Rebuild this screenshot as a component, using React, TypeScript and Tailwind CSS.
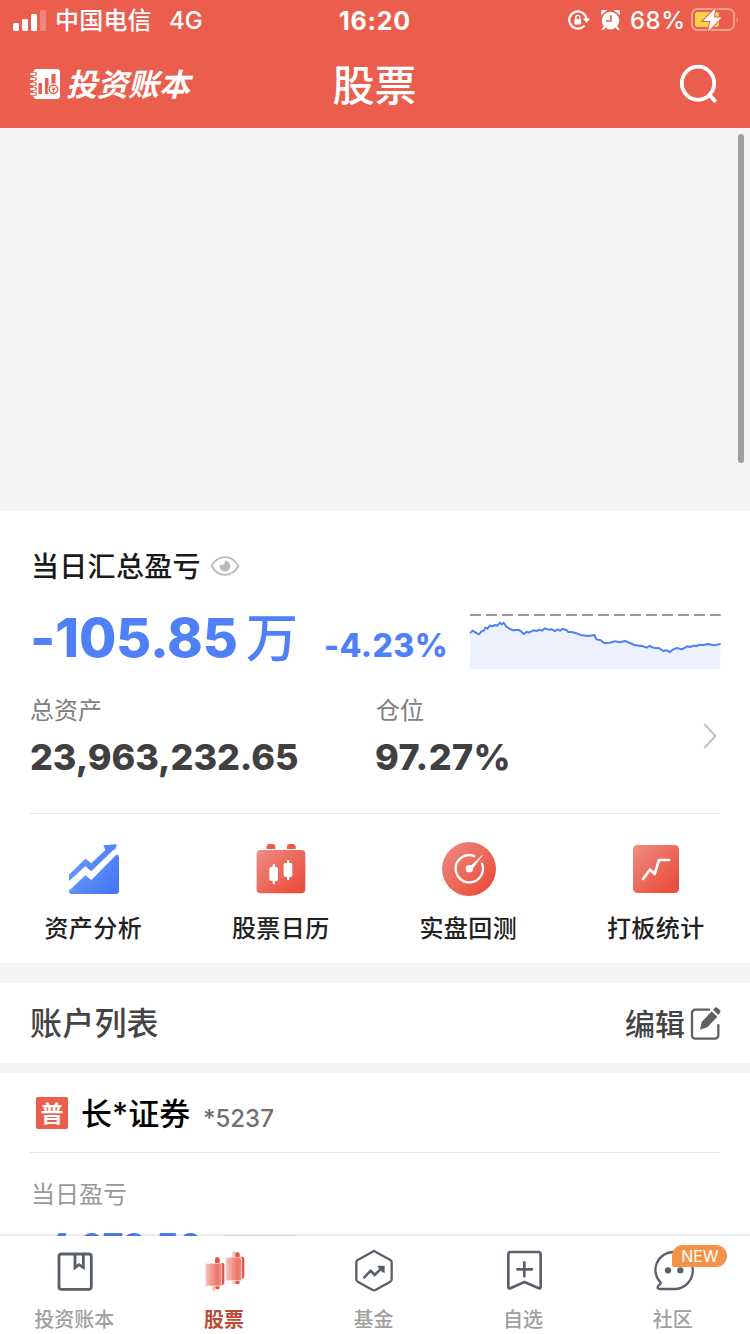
import React from 'react';

const trend = [
  [480, 114], [488, 107], [496, 112], [507, 118], [514, 110], [522, 106], [526, 98], [532, 101],
  [540, 91], [547, 94], [555, 90], [562, 92], [570, 83], [575, 88], [581, 83], [588, 94],
  [600, 102], [610, 106], [625, 104], [634, 110], [642, 117], [650, 110], [657, 113], [670, 106],
  [680, 108], [688, 104], [695, 107], [705, 100], [715, 104], [725, 103], [735, 108], [743, 103],
  [750, 107], [757, 102], [768, 104], [775, 111], [785, 111], [800, 115], [815, 121], [835, 123],
  [853, 120], [859, 133], [872, 136], [882, 144], [900, 143], [915, 139], [930, 142], [945, 138],
  [960, 144], [975, 151], [990, 152], [1000, 154], [1010, 158], [1018, 153], [1030, 158], [1048, 160],
  [1060, 168], [1070, 166], [1080, 171], [1090, 163], [1100, 159], [1115, 163], [1125, 158], [1132, 154],
  [1140, 156], [1150, 152], [1160, 153], [1168, 149], [1180, 150], [1195, 147], [1205, 149], [1215, 151],
  [1225, 148], [1232, 147],
];

const StatusBar: React.FC = () => (
  <div className="flex h-10 items-center pl-[13px] pr-[11px] text-white">
    <svg className="h-[21px] w-[33px]" viewBox="0 0 33 21" fill="currentColor">
      <rect x="0" y="13" width="6" height="8" rx="1.5" />
      <rect x="9" y="9" width="6" height="12" rx="1.5" />
      <rect x="18" y="4" width="6" height="17" rx="1.5" />
      <rect x="27" y="0" width="6" height="21" rx="1.5" opacity="0.25" />
    </svg>
    <span className="ml-[9px] w-[114px] pt-[2px] text-[24px] font-medium leading-10 tracking-[0.2px]">中国电信</span>
    <span className="w-[170px] pt-[2px] text-[24px] font-medium leading-10">4G</span>
    <span className="w-[229px] pt-[2px] text-[25px] font-bold leading-10 tracking-[0.8px]">16:20</span>
    <svg className="h-5 w-[22px]" viewBox="0 0 22 20" fill="none" stroke="currentColor" strokeWidth="2.2">
      <path d="M18.4 9.2A8.6 8.6 0 1 0 15.8 16.2" strokeLinecap="round" />
      <path d="M15 8.6H22L18.6 13Z" fill="currentColor" stroke="none" />
      <rect x="6.4" y="9" width="6.8" height="5.6" rx="1" fill="currentColor" stroke="none" />
      <path d="M7.8 9.4V7.4a2 2 0 0 1 4 0V9.4" strokeWidth="1.4" />
    </svg>
    <svg className="ml-[11px] h-5 w-[19px]" viewBox="0 0 19 20" fill="currentColor">
      <circle cx="9.5" cy="10.6" r="8.8" />
      <path d="M0.4 5A3.2 3.2 0 0 1 6 0.6ZM18.6 5A3.2 3.2 0 0 0 13 0.6Z" />
      <path d="M3.6 17L1.6 19.4M15.4 17L17.4 19.4" stroke="currentColor" strokeWidth="2" strokeLinecap="round" />
      <path d="M10 5V11H5" fill="none" stroke="#eb5e4e" strokeWidth="1.6" />
    </svg>
    <span className="ml-[10px] w-[61px] whitespace-nowrap pt-[2px] text-[24px] font-medium leading-10 tracking-[0.5px]">68%</span>
    <svg className="h-6 w-12" viewBox="0 0 48 24" fill="none">
      <rect x="1" y="1" width="42" height="21" rx="5.5" stroke="#fff" strokeOpacity="0.4" strokeWidth="2" />
      <path d="M45.6 8.5C47.5 9.5 47.5 14 45.6 15Z" fill="#fff" fillOpacity="0.4" />
      <rect x="4" y="4" width="24" height="15" rx="2.5" fill="#f7d04c" />
      <path d="M24.5 0L12 13H19.5L17 23.5L30.5 9.5H22.8Z" fill="#fff" stroke="#eb5e4e" strokeWidth="2" paintOrder="stroke" />
    </svg>
  </div>
);

const Header: React.FC = () => (
  <div className="flex h-[88px] items-center justify-between pl-[30px] pr-8 text-white">
    <div className="flex w-[200px] items-center">
      <svg className="h-[30px] w-[31px]" viewBox="0 0 31 30">
        <rect x="3.5" y="0" width="26.5" height="30" rx="3" fill="#fff" />
        {[5, 10, 15, 20, 25].map((y) => (
          <g key={y}>
            <rect x="3" y={y - 2} width="4" height="4" rx="2" fill="#eb5e4e" />
            <rect x="0" y={y - 1} width="5.6" height="2" rx="1" fill="#fff" />
          </g>
        ))}
        <path d="M8.5 14H12V25H8.5ZM15 9H18.5V25H15ZM21.5 5H25.5V16H21.5Z" fill="#eb5e4e" />
        <circle cx="23.5" cy="20.3" r="5.4" fill="#eb5e4e" stroke="#fff" strokeWidth="1" />
        <circle cx="23.5" cy="20.3" r="3.4" fill="#fff" />
        <path d="M21.8 18.2L23.5 20L25.2 18.2M21.8 20.4H25.2M23.5 20V23" stroke="#eb5e4e" strokeWidth="1" fill="none" />
      </svg>
      <span className="ml-[5px] pt-[2px] text-[31px] font-bold italic leading-[44px]">投资账本</span>
    </div>
    <h1 className="pt-[3px] pr-px text-[42px] font-medium leading-[60px]">股票</h1>
    <div className="flex w-[198px] justify-end">
      <svg className="-mr-px h-10 w-10" viewBox="0 0 40 40" fill="none" stroke="currentColor" strokeWidth="3.8">
        <ellipse cx="19" cy="19.2" rx="16.2" ry="16.6" />
        <path d="M30.5 31L35.6 36.6" strokeLinecap="round" strokeWidth="4" />
      </svg>
    </div>
  </div>
);

const EyeIcon: React.FC = () => (
  <svg className="-mt-[2px] h-5 w-[30px]" viewBox="0 0 30 20" fill="none">
    <path d="M1.5 10C5 4 10 1.2 15 1.2S25 4 28.5 10C25 16 20 18.8 15 18.8S5 16 1.5 10Z" stroke="#bbb" strokeWidth="1.8" strokeLinejoin="round" />
    <path d="M15 4.6A5.4 5.4 0 1 1 9.6 10C9.6 9.4 9.8 8.6 10 8.2C11.5 9.8 15.4 9 15 4.6Z" fill="#bbb" />
  </svg>
);

const TrendChart: React.FC = () => {
  const line = trend.map(([x, y]) => `${x},${y}`).join(' ');
  return (
    <svg className="h-[57px] w-[252px]" viewBox="477 51 756 171" fill="none">
      <polygon points={`480,222 ${line} 1230,222`} fill="#edf1fd" />
      <polyline points={line} stroke="#5080f7" strokeWidth="6" strokeLinejoin="round" />
      <path d="M480 60H1232" stroke="#999" strokeWidth="6" strokeDasharray="33 15" />
    </svg>
  );
};

const Summary: React.FC = () => (
  <section className="h-[302px] px-[30px] pt-[34px]">
    <div className="flex h-11 items-center">
      <h2 className="w-[180px] pl-px text-[28px] font-medium leading-[44px] tracking-[0.3px] text-[#1a1a1a]">当日汇总盈亏</h2>
      <EyeIcon />
    </div>
    <div className="flex h-[90px] items-start text-[#5080f7]">
      <div className="flex w-[294px] shrink-0 items-baseline pt-[14px] leading-[70px]">
        <span className="w-[216px] text-[54px] font-extrabold tracking-[-0.2px]">-105.85</span>
        <span className="text-[52px] font-medium">万</span>
      </div>
      <span className="w-[145px] shrink-0 pt-[34px] text-[32px] font-extrabold leading-[46px] tracking-[0.4px]">-4.23%</span>
      <div className="shrink-0 pt-[23px]">
        <TrendChart />
      </div>
    </div>
    <div className="flex h-[116px] items-start">
      <div className="w-[345px]">
        <p className="pt-[14px] text-[24px] leading-[36px] text-[#808080]">总资产</p>
        <p className="pt-[4px] text-[36px] font-extrabold leading-[48px] tracking-[-0.1px] text-[#404040]">23,963,232.65</p>
      </div>
      <div className="w-[328px]">
        <p className="pt-[14px] pl-px text-[24px] leading-[36px] text-[#808080]">仓位</p>
        <p className="pt-[4px] text-[36px] font-extrabold leading-[48px] tracking-[0.4px] text-[#404040]">97.27%</p>
      </div>
      <svg className="mt-[44px] h-[26px] w-[14px]" viewBox="0 0 14 26" fill="none" stroke="#c4c4c4" strokeWidth="2.2">
        <path d="M1.5 1L12.3 13L1.5 25" />
      </svg>
    </div>
  </section>
);

const AnalysisIcon: React.FC = () => (
  <svg className="h-[54px] w-[54px]" viewBox="0 0 162 162">
    <defs>
      <linearGradient id="blue" x1="0" y1="0" x2="1" y2="0.6">
        <stop offset="0" stopColor="#6ea3fa" />
        <stop offset="1" stopColor="#4878f5" />
      </linearGradient>
    </defs>
    <path d="M6 96L55 48L73 62L115 22L109 8L150 5L144 22L73 89L55 77L6 124Z" fill="url(#blue)" transform="translate(0 2)" />
    <path d="M6 146L55 100L73 114L147 39Q156 36 156 46V147Q156 156 147 156H14Q6 156 6 148Z" fill="url(#blue)" />
    <path d="M6 127L55 82L73 97L146 27" stroke="#fff" strokeWidth="14" fill="none" />
  </svg>
);

const CalendarIcon: React.FC = () => (
  <svg className="h-[54px] w-[54px]" viewBox="0 0 162 162">
    <defs>
      <linearGradient id="red" x1="0" y1="0" x2="1" y2="1">
        <stop offset="0" stopColor="#f09086" />
        <stop offset="0.2" stopColor="#ed7e74" />
        <stop offset="0.85" stopColor="#ea503f" />
      </linearGradient>
    </defs>
    <path d="M38 21V14Q38 6 46 6H56Q64 6 64 14V21ZM99 21V14Q99 6 107 6H117Q125 6 125 14V21Z" fill="#ea5a50" />
    <rect x="8" y="24" width="146" height="130" rx="12" fill="url(#red)" />
    <g fill="#fff">
      <rect x="46" y="75" width="26" height="42" rx="5" />
      <rect x="56" y="66" width="7" height="61" rx="3" />
      <rect x="89" y="63" width="26" height="42" rx="5" />
      <rect x="99" y="54" width="7" height="61" rx="3" />
    </g>
  </svg>
);

const GaugeIcon: React.FC = () => (
  <svg className="h-[54px] w-[54px]" viewBox="0 0 162 162">
    <circle cx="81" cy="81" r="81" fill="url(#red)" />
    <path d="M97 42A41 41 0 1 0 120 65" fill="none" stroke="#fff" strokeWidth="7" strokeLinecap="round" />
    <circle cx="82" cy="80" r="11" fill="#fff" />
    <path d="M84 74L121 40L90 82Z" fill="#fff" stroke="#fff" strokeWidth="2" />
  </svg>
);

const BoardIcon: React.FC = () => (
  <svg className="h-[54px] w-[54px]" viewBox="0 0 162 162">
    <rect x="12" y="9" width="138" height="144" rx="13" fill="url(#red)" />
    <path d="M42 111L63 83L77 96L90 54H120" fill="none" stroke="#fff" strokeWidth="8" strokeLinecap="round" strokeLinejoin="round" />
  </svg>
);

const tools = [
  { label: '资产分析', Icon: AnalysisIcon },
  { label: '股票日历', Icon: CalendarIcon },
  { label: '实盘回测', Icon: GaugeIcon },
  { label: '打板统计', Icon: BoardIcon },
];

const EditIcon: React.FC = () => (
  <svg className="h-9 w-8" viewBox="0 0 96 108" fill="none">
    <path d="M60 14H17Q6 14 6 25V90Q6 101 17 101H74Q85 101 85 90V58" stroke="#606060" strokeWidth="7" />
    <path d="M30 74L35 51L65 19L82 35L52 67Z" fill="#606060" />
    <path d="M69 14L75 8Q78 5 82 8L90 16Q93 19 90 23L85 30Z" fill="#606060" />
  </svg>
);

const BookIcon: React.FC = () => (
  <svg className="h-[42px] w-[42px]" viewBox="0 0 126 126" fill="none" stroke="#5a606b" strokeWidth="8.5">
    <rect x="15" y="12" width="97" height="106" rx="8" />
    <path d="M63 12V53L75 44L88 53V12" />
  </svg>
);

const StockIcon: React.FC = () => (
  <svg className="h-[42px] w-[42px]" viewBox="0 0 126 126">
    <defs>
      <linearGradient id="candle" x1="0" y1="0" x2="1" y2="0">
        <stop offset="0" stopColor="#f7c4bd" />
        <stop offset="0.75" stopColor="#ec7468" />
        <stop offset="1" stopColor="#f0948b" />
      </linearGradient>
    </defs>
    <g transform="translate(2 2)">
      <rect x="34" y="20" width="14" height="96" rx="6" fill="#ea5040" />
      <rect x="20" y="37" width="42" height="66" rx="6" fill="#ea5040" />
      <rect x="26" y="98" width="9" height="24" fill="#f7c4bd" />
      <path d="M5 38H51Q54 38 54 42V106H8Q5 106 5 102Z" fill="url(#candle)" stroke="#fff" strokeWidth="2" />
    </g>
    <g transform="translate(2 2)">
      <rect x="94" y="5" width="14" height="96" rx="6" fill="#ea5040" />
      <rect x="80" y="18" width="42" height="66" rx="6" fill="#ea5040" />
      <rect x="86" y="2" width="9" height="98" fill="#f7c4bd" />
      <path d="M66 20H111Q114 20 114 24V90H69Q66 90 66 86Z" fill="url(#candle)" stroke="#fff" strokeWidth="2" />
    </g>
  </svg>
);

const FundIcon: React.FC = () => (
  <svg className="h-[42px] w-[42px]" viewBox="0 0 126 126" fill="none" stroke="#5a606b" strokeWidth="7" strokeLinejoin="round">
    <path d="M59 5Q63 2 67 5L112 30Q116 32 116 37V88Q116 92 112 95L67 120Q63 122 59 120L14 95Q10 92 10 88V37Q10 32 14 30Z" />
    <path d="M34 82L53 62L65 75L85 55" strokeWidth="8" strokeLinecap="round" />
    <path d="M73 47H95V69L87 66L78 56Z" fill="#5a606b" stroke="none" />
  </svg>
);

const WatchIcon: React.FC = () => (
  <svg className="h-[42px] w-[42px]" viewBox="0 0 126 126" fill="none" stroke="#5a606b" strokeWidth="8" strokeLinejoin="round">
    <path d="M22 6H106Q113 6 113 14V110Q113 118 106 114L64 96L24 114Q16 118 16 110V14Q16 6 22 6Z" />
    <path d="M64 37V79M43 58H87" strokeLinecap="round" />
  </svg>
);

const CommunityIcon: React.FC = () => (
  <svg className="h-[42px] w-[42px]" viewBox="0 0 126 126" fill="none" stroke="#5a606b" strokeWidth="7" strokeLinejoin="round">
    <path d="M67 6A54 54 0 0 1 67 117H24Q14 117 18 109L27 99A54 54 0 0 1 67 6Z" />
    <circle cx="48" cy="61" r="9.5" fill="#5a606b" stroke="none" />
    <circle cx="85" cy="61" r="9.5" fill="#5a606b" stroke="none" />
  </svg>
);

const tabs = [
  { label: '投资账本', Icon: BookIcon },
  { label: '股票', Icon: StockIcon, active: true },
  { label: '基金', Icon: FundIcon },
  { label: '自选', Icon: WatchIcon },
  { label: '社区', Icon: CommunityIcon, badge: 'NEW' },
];

const TabBar: React.FC = () => (
  <nav className="z-10 -mt-[2px] h-[100px] shrink-0 border-t-2 border-black/8 bg-white bg-clip-padding">
    <div className="mr-[2px] grid h-full grid-cols-5">
      {tabs.map(({ label, Icon, active, badge }) => (
        <div key={label} className="relative flex flex-col items-center pt-[14px]">
          <Icon />
          <span
            className={`mt-[13px] pr-px text-[20px] leading-[30px] ${active ? 'font-bold text-[#bd4a35]' : 'font-medium text-[#a0a0a0]'}`}
          >
            {label}
          </span>
          {badge && (
            <span className="absolute left-[74px] top-[9px] h-[22px] w-[55px] rounded-[11px] rounded-bl-[2px] bg-[#f29349] text-center text-[16px] leading-[22px] text-white">
              {badge}
            </span>
          )}
        </div>
      ))}
    </div>
  </nav>
);

const App: React.FC = () => (
  <div className="relative flex h-[1334px] w-[750px] flex-col overflow-hidden bg-white font-['Inter','Noto_Sans_CJK_SC',sans-serif]">
    <header className="h-32 shrink-0 bg-[#eb5e4e]">
      <StatusBar />
      <Header />
    </header>

    <main className="h-[1108px] shrink-0 overflow-hidden">
      <div className="h-[383px] bg-[#f4f4f4]" />
      <Summary />

      {/* Tools */}
      <div className="mx-[30px] h-px bg-[#e5e5e5]" />
      <div className="grid h-[149px] grid-cols-4">
        {tools.map(({ label, Icon }) => (
          <div key={label} className="flex flex-col items-center pt-[28px]">
            <Icon />
            <span className="mt-[15px] pr-px text-[24px] font-medium leading-[36px] tracking-[0.4px] text-[#222]">{label}</span>
          </div>
        ))}
      </div>
      <div className="h-5 bg-[#f4f4f4]" />

      {/* Accounts */}
      <div className="flex h-20 items-center justify-between pl-[30px] pr-[28px] text-[#444]">
        <h2 className="pt-[2px] text-[32px] font-medium leading-[48px] tracking-[0.2px]">账户列表</h2>
        <div className="flex items-center gap-[5px]">
          <span className="pt-[2px] text-[30px] font-medium leading-[48px]">编辑</span>
          <EditIcon />
        </div>
      </div>
      <div className="h-[10px] bg-[#f4f4f4]" />
      <div className="px-[30px]">
        <div className="flex h-20 items-center border-b border-[#e5e5e5] pl-[6px]">
          <span className="h-8 w-8 rounded-[2px] bg-[#eb5e4e] text-center text-[23px] font-bold leading-[34px] text-white">普</span>
          <span className="ml-[13px] w-[122px] whitespace-nowrap pt-[2px] text-[31px] font-medium leading-[48px] text-black">长*证券</span>
          <span className="pt-[12px] text-[24px] font-medium leading-[36px] text-[#707070]">*5237</span>
        </div>
        <p className="pt-[24px] pl-px text-[24px] leading-[36px] text-[#999]">当日盈亏</p>
        <div className="flex pt-[9px]">
          <p className="w-[189px] text-[36px] font-bold leading-[48px] tracking-[-0.5px] text-[#5080f7]">-4,079.50</p>
          <span className="mt-[13px] h-8 w-[82px] rounded bg-[#f4f4f4]" />
        </div>
      </div>
    </main>

    <TabBar />
    <div className="absolute right-[6px] top-[134px] h-[329px] w-[6px] rounded-full bg-[#9f9f9f]" />
  </div>
);

export default App;
